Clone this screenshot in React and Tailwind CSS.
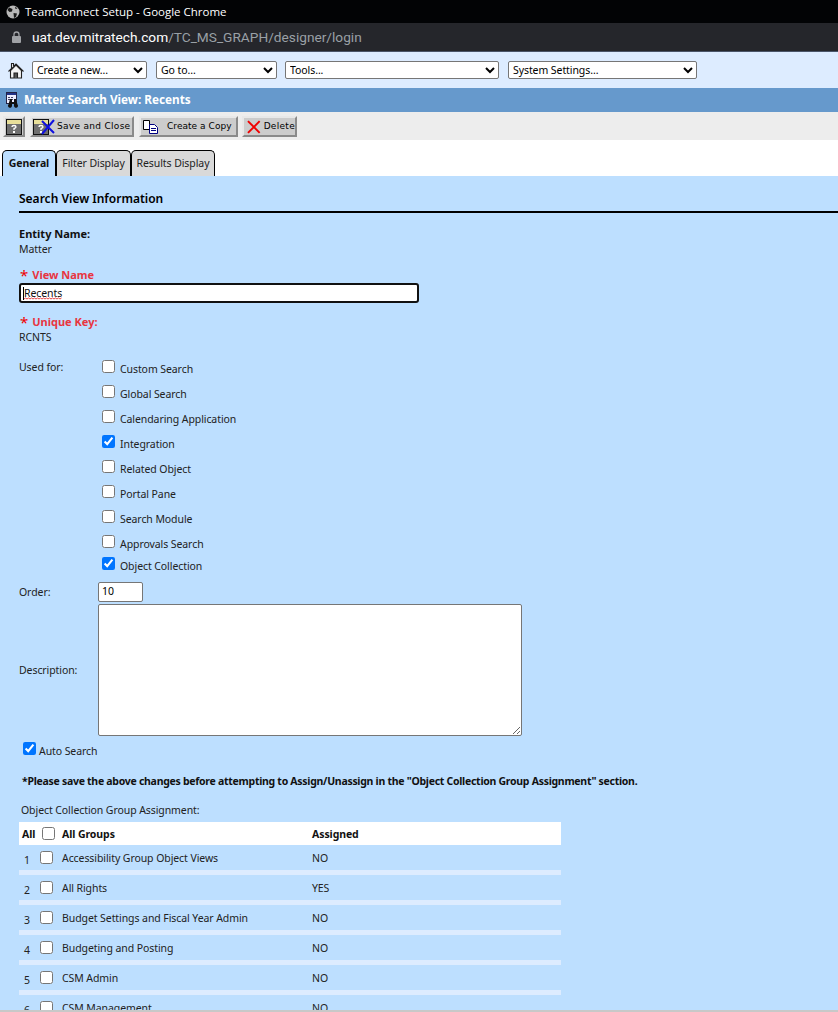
import React from "react";

const usedFor = [
  { label: "Custom Search", h: "h-[25px]" },
  { label: "Global Search", h: "h-[25px]" },
  { label: "Calendaring Application", h: "h-[25px]" },
  { label: "Integration", h: "h-[25px]", checked: true },
  { label: "Related Object", h: "h-[25px]" },
  { label: "Portal Pane", h: "h-[25px]" },
  { label: "Search Module", h: "h-[25px]" },
  { label: "Approvals Search", h: "h-[22px]" },
  { label: "Object Collection", h: "h-[22px]", checked: true },
];

const groups = [
  ["Accessibility Group Object Views", "NO"],
  ["All Rights", "YES"],
  ["Budget Settings and Fiscal Year Admin", "NO"],
  ["Budgeting and Posting", "NO"],
  ["CSM Admin", "NO"],
  ["CSM Management", "NO"],
];

function HelpIcon() {
  return (
    <svg width="16" height="16" viewBox="0 0 16 16" className="block">
      <rect width="16" height="16" fill="#111" />
      <rect x="1" y="1" width="14" height="4" fill="#e8df9a" />
      <rect x="1" y="5" width="14" height="10" fill="#6f6f6f" />
      <path d="M6 8Q6 6.500 8 6.500 10 6.500 10 8 10 9 8 9.500V11" stroke="#fff" strokeWidth="1.300" fill="none" />
      <rect x="7" y="12" width="2" height="2" fill="#fff" />
    </svg>
  );
}

function HomeIcon() {
  return (
    <svg width="16" height="17" viewBox="0 0 16 17" fill="none" stroke="#222" strokeWidth="1.100" className="block">
      <path d="M.5 9.500 8 2l7.500 7.500" />
      <path d="M2.500 8.500V16h11V8.500L8 3Z" fill="#f4f4f4" />
      <path d="M6 16v-5h3.500v5" fill="#555" />
      <path d="M3.500 6V1.500h2V4" fill="#f4f4f4" />
    </svg>
  );
}

function Button({ className, children }) {
  return (
    <div className={`flex h-[21px] items-center whitespace-nowrap border-2 border-t-[#e8e8e8] border-l-[#e8e8e8] border-r-[#8a8a8a] border-b-[#8a8a8a] bg-[#cccccc] font-['DejaVu_Sans',sans-serif] text-[9px] tracking-[0.3px] text-black ${className}`}>
      {children}
    </div>
  );
}

function Tab({ active, className, children }) {
  return (
    <div className={`flex h-[26px] items-center justify-center rounded-t-[5px] border border-b-0 border-black pt-[1px] ${active ? "bg-[#bddfff] font-bold text-[#111]" : "bg-[#d9d9d9] text-[#222]"} ${className}`}>
      {children}
    </div>
  );
}

function RequiredLabel({ children }) {
  return (
    <div className="flex h-[14px] items-center text-[11px] font-bold tracking-normal text-[#e8353f]">
      <span className="ml-[1px] mr-[4px] text-[15px] font-normal leading-[14px] text-[#f00000]">*</span>
      {children}
    </div>
  );
}

export default function App() {
  return (
    <div className="flex h-[1012px] w-[838px] flex-col overflow-hidden bg-white font-['Noto_Sans',sans-serif] text-[10.500px] tracking-[-0.08px] text-[#222]">
      <div className="flex h-[23px] items-center bg-[#020305] pl-[6px] text-white">
        <svg width="14" height="14" viewBox="0 0 14 14">
          <circle cx="7" cy="7" r="6.500" fill="#b8b8b8" />
          <path d="M3 2.500 6.500 4 6 6.500 3.500 7 1.500 5ZM7.500 8l3.500.5-1 3.500-2 1Z M9 1.500l2.500 2-2 .5Z" fill="#1a1a1a" />
        </svg>
        <span className="ml-[5px] font-['Open_Sans',sans-serif] text-[11.500px] tracking-normal">TeamConnect Setup - Google Chrome</span>
      </div>
      <div className="flex h-[28px] items-center bg-[#25262b] pl-[12px] font-['Roboto',sans-serif] text-[13.700px] tracking-normal">
        <svg width="9" height="12" viewBox="0 0 9 12" fill="#a0a2a6">
          <rect y="5" width="9" height="7" rx="1" />
          <path d="M2 5.500V3.500a2.500 2.500 0 0 1 5 0v2" fill="none" stroke="#a0a2a6" strokeWidth="1.300" />
        </svg>
        <span className="ml-[11px] text-white">uat.dev.mitratech.com</span>
        <span className="text-[#9aa0a6]">/TC_MS_GRAPH/designer/login</span>
      </div>
      <div className="flex h-[37px] items-center border-t border-[#4a5568] bg-[#ddecff] pl-[8px]">
        <HomeIcon />
        <select className="ml-[8px] h-[18px] w-[115px] rounded-[2px] border border-[#767676] bg-white text-[10.500px] text-black"><option>Create a new...</option></select>
        <select className="ml-[9px] h-[18px] w-[121px] rounded-[2px] border border-[#767676] bg-white text-[10.500px] text-black"><option>Go to...</option></select>
        <select className="ml-[8px] h-[18px] w-[214px] rounded-[2px] border border-[#767676] bg-white text-[10.500px] text-black"><option>Tools...</option></select>
        <select className="ml-[9px] h-[18px] w-[189px] rounded-[2px] border border-[#767676] bg-white text-[10.500px] text-black"><option>System Settings...</option></select>
      </div>
      <div className="flex h-[24px] items-center bg-[#6699cc] pl-[6px] text-[11.750px] font-bold tracking-normal text-white">
        <svg width="14" height="16" viewBox="0 0 14 16">
          <rect x=".5" y=".5" width="10" height="11" fill="#eef" stroke="#224" />
          <rect x="1" y="1" width="9" height="2" fill="#223388" />
          <path d="M2 5h2v1H2ZM5 5h2v1H5ZM2 7h2v1H2ZM5 7h2v1H5Z" fill="#446" />
          <path d="M4 7h2v3h2V7h2l1.500 5.500a2 2 0 1 1-3.500 1V12H6v1.500a2 2 0 1 1-3.500-1Z" fill="#111" />
        </svg>
        <span className="ml-[4px]">Matter Search View: Recents</span>
      </div>
      <div className="flex h-[28px] items-start bg-[#ededed] pl-[3px] pt-[4px]">
        <Button className="w-[22px] justify-center"><HelpIcon /></Button>
        <Button className="ml-[5px] w-[104px] pl-[1px]">
          <span className="relative">
            <HelpIcon />
            <svg className="absolute left-[7px] top-0" width="16" height="16" viewBox="0 0 16 16">
              <path d="M2 2 14 14M14 1 2 15" stroke="#1010e0" strokeWidth="2" />
            </svg>
          </span>
          <span className="ml-[8px]">Save and Close</span>
        </Button>
        <Button className="ml-[5px] w-[99px] pl-[2px]">
          <svg width="16" height="14" viewBox="0 0 16 14" fill="#fff" stroke="#000080">
            <path d="M.5.500h6v9h-6Z" stroke="#000" />
            <path d="M6.500 4.500h5l3 3v6h-8Z" />
            <path d="M8 8.500h5M8 10.500h5" />
          </svg>
          <span className="ml-[8px] tracking-[0.05px]">Create a Copy</span>
        </Button>
        <Button className="ml-[4px] w-[55px] pl-[3px]">
          <svg width="14" height="14" viewBox="0 0 14 14">
            <path d="M1 1 13 13M13 1 1 13" stroke="#f00000" strokeWidth="2" />
          </svg>
          <span className="ml-[3px]">Delete</span>
        </Button>
      </div>
      <div className="flex h-[36px] items-end bg-white pl-[2px]">
        <Tab active className="w-[54px]">General</Tab>
        <Tab className="w-[75px]">Filter Display</Tab>
        <Tab className="w-[84px]">Results Display</Tab>
      </div>

      <div className="min-h-0 flex-1 overflow-hidden bg-[#bddfff] pl-[19px]">
        <div className="flex h-[37px] items-end border-b-2 border-black pb-[3px] text-[12px] font-semibold tracking-normal text-black">
          Search View Information
        </div>
        <div className="mt-[13px] h-[15px] text-[11px] font-bold leading-[15px] tracking-normal text-[#111]">Entity Name:</div>
        <div className="mt-[1px] h-[15px] leading-[15px] text-[#222]">Matter</div>
        <div className="mt-[11px]"><RequiredLabel>View Name</RequiredLabel></div>
        <div className="mt-[1px] flex h-[20px] w-[400px] items-center rounded-[3px] border-2 border-[#111] bg-white pl-[2px] leading-[14px] text-[#111]">
          <span className="h-[13px] w-[1px] bg-black" />
          <span className="relative">
            Recents
            <svg className="absolute left-0 top-[11px]" width="38" height="3" viewBox="0 0 38 3" fill="none">
              <path d="M0 2 1.500 1 3 2 4.500 1 6 2 7.500 1 9 2 10.500 1 12 2 13.500 1 15 2 16.500 1 18 2 19.500 1 21 2 22.500 1 24 2 25.500 1 27 2 28.500 1 30 2 31.500 1 33 2 34.500 1 36 2 37.500 1" stroke="#e03030" strokeWidth=".9" />
            </svg>
          </span>
        </div>
        <div className="mt-[12px]"><RequiredLabel>Unique Key:</RequiredLabel></div>
        <div className="mt-[1px] h-[15px] leading-[15px]">RCNTS</div>

        <div className="mt-[14px] flex">
          <div className="w-[83px] pt-[1px] leading-[15px]">Used for:</div>
          <div className="flex flex-col">
            {usedFor.map((item) => (
              <div key={item.label} className={`flex items-start ${item.h}`}>
                <input type="checkbox" defaultChecked={item.checked} className="m-0 mt-[1px] size-[13px]" />
                <span className="ml-[5px] mt-[2px] leading-[17px]">{item.label}</span>
              </div>
            ))}
          </div>
        </div>

        <div className="mt-[4px] flex">
          <div className="w-[79px] pt-[3px] leading-[15px]">Order:</div>
          <div className="flex h-[20px] w-[45px] items-center rounded-[2px] border border-[#767676] bg-white pl-[3px] text-black">10</div>
        </div>
        <div className="mt-[2px] flex items-center">
          <div className="w-[79px] leading-[15px]">Description:</div>
          <textarea defaultValue="" className="h-[132px] w-[424px] rounded-[2px] border border-[#767676] bg-white" />
        </div>

        <div className="ml-[4px] mt-[6px] flex h-[17px] items-start">
          <input type="checkbox" defaultChecked className="m-0 size-[13px]" />
          <span className="ml-[3px] mt-[2px] leading-[15px]">Auto Search</span>
        </div>
        <div className="ml-[3px] mt-[15px] h-[15px] whitespace-nowrap font-bold leading-[15px] tracking-[-0.28px] text-[#111]">
          *Please save the above changes before attempting to Assign/Unassign in the "Object Collection Group Assignment" section.
        </div>
        <div className="ml-[2px] mt-[14px] h-[15px] leading-[15px]">Object Collection Group Assignment:</div>

        <div className="mt-[4px] w-[542px]">
          <div className="flex h-[23px] items-center bg-white font-bold text-[#111]">
            <span className="ml-[3px] mt-[2px] w-[20px]">All</span>
            <input type="checkbox" className="m-0 size-[13px]" />
            <span className="ml-[7px] mt-[2px] w-[250px]">All Groups</span>
            <span className="mt-[2px]">Assigned</span>
          </div>
          {groups.map(([name, assigned], i) => (
            <div key={name} className="flex h-[30px] items-start border-b-[5px] border-[#ddecff]">
              <span className="ml-[5px] mt-[8px] w-[16px] leading-[15px]">{i + 1}</span>
              <input type="checkbox" className="m-0 mt-[6px] size-[13px]" />
              <span className="ml-[9px] mt-[6px] w-[250px] leading-[15px]">{name}</span>
              <span className="mt-[6px] leading-[15px]">{assigned}</span>
            </div>
          ))}
        </div>
      </div>
      <div className="h-[2px] bg-[#c8c8c8]" />
    </div>
  );
}
